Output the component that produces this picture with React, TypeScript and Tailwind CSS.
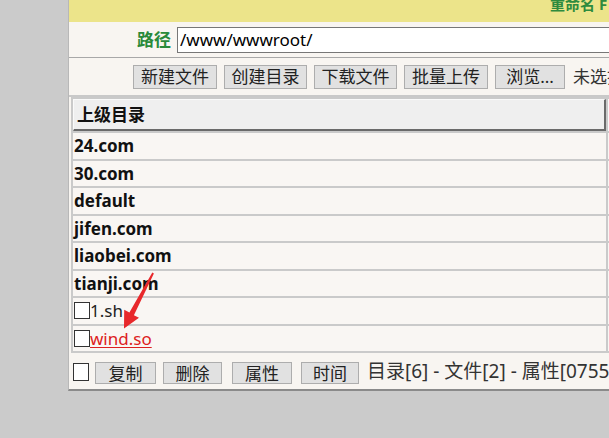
import React from 'react';

const font = { fontFamily: '"Noto Sans", "Noto Sans CJK SC", sans-serif' };

const topButtons = [
  { label: '新建文件', w: 'w-[84px]' },
  { label: '创建目录', w: 'w-[83px]' },
  { label: '下载文件', w: 'w-[83px]' },
  { label: '批量上传', w: 'w-[84px]' },
  { label: '浏览...', w: 'w-[70px]' },
];

const footerButtons = [
  { label: '复制', cls: 'w-[61px]' },
  { label: '删除', cls: 'w-[59px] ml-[7px]' },
  { label: '属性', cls: 'w-[60px] ml-[10px]' },
  { label: '时间', cls: 'w-[58px] ml-[9px]' },
];

const dirs = ['24.com', '30.com', 'default', 'jifen.com', 'liaobei.com', 'tianji.com'];

const Check = () => (
  <span className="inline-block w-[16px] h-[17px] border border-[#333] bg-white shrink-0" />
);

export default function App() {
  return (
    <div className="relative w-[609px] h-[438px] overflow-hidden bg-[#cbcbcb]" style={font}>
      <div className="ml-[68px] w-[640px] bg-[#f8f5f1] border-l border-[#b8b8b8] border-b-2 border-b-[#8a8a8a]">
        {/* yellow title band */}
        <div className="h-[22px] bg-[#ece48a] overflow-hidden">
          <div className="pl-[481px] -mt-[4px] text-[15px] font-bold text-[#2e8b3e] leading-[16px] whitespace-nowrap">
            重命名 F
          </div>
        </div>

        {/* path row */}
        <div className="h-[36px] flex items-start border-b border-[#a8a8a8]">
          <span className="ml-[68px] mt-[7px] text-[17px] font-bold text-[#2a8a3a] leading-[22px]">路径</span>
          <div className="ml-[6px] mt-[5px] h-[26px] w-[480px] bg-white border border-[#777] flex items-center pl-[2px] text-[17px] text-black">
            /www/wwwroot/
          </div>
        </div>

        {/* buttons row */}
        <div className="h-[39px] flex items-start pt-[7px] pl-[64px] gap-[7px] border-b-2 border-[#c9c9c9]">
          {topButtons.map(b => (
            <button
              key={b.label}
              className={`${b.w} h-[24px] bg-[#e1e1e1] border border-[#adadad] text-[17px] leading-[20px] text-[#222] flex items-center justify-center`}
            >
              {b.label}
            </button>
          ))}
          <span className="text-[17px] leading-[24px] text-[#333] whitespace-nowrap ml-[1px]">未选择</span>
        </div>

        {/* listing table */}
        <div className="ml-[2px] bg-[#cacaca] p-[2px] flex flex-col gap-[2px]">
          <div className="flex gap-[2px]">
            <div className="w-[533px] h-[32px] bg-[#efefef] border-t border-l border-[#fafafa] border-r-2 border-b-2 border-r-[#6a6a6a] border-b-[#6a6a6a] flex items-center pl-[3px] text-[17px] font-bold text-[#111]">
              上级目录
            </div>
            <div className="w-[60px] h-[32px] bg-[#efefef] border-l border-[#fafafa]" />
          </div>
          {dirs.map(d => (
            <div key={d} className="flex gap-[2px]">
              <div className="w-[533px] h-[25.5px] bg-[#f9f6f3] flex items-center pl-[1px] text-[17px] font-bold text-[#111]">
                {d}
              </div>
              <div className="w-[60px] h-[25.5px] bg-[#f9f6f3]" />
            </div>
          ))}
          <div className="flex gap-[2px]">
            <div className="w-[533px] h-[25.5px] bg-[#f9f6f3] flex items-center pl-[1px] text-[17px] text-[#222]">
              <Check />
              <span>1.sh</span>
            </div>
            <div className="w-[60px] h-[25.5px] bg-[#f9f6f3]" />
          </div>
          <div className="flex gap-[2px]">
            <div className="w-[533px] h-[25.5px] bg-[#f9f6f3] flex items-center pl-[1px] text-[17px]">
              <Check />
              <span className="text-[#dd2020] underline underline-offset-2">wind.so</span>
            </div>
            <div className="w-[60px] h-[25.5px] bg-[#f9f6f3]" />
          </div>
        </div>

        {/* footer */}
        <div className="h-[36px] flex items-start pt-[9px] pl-[4px]">
          <span className="mt-[1px] inline-block w-[16px] h-[18px] border border-[#333] bg-white" />
          <div className="ml-[6px] flex">
            {footerButtons.map(b => (
              <button
                key={b.label}
                className={`${b.cls} h-[22px] bg-[#e1e1e1] border border-[#adadad] text-[17px] leading-[20px] text-[#222] flex items-center justify-center pt-[2px]`}
              >
                {b.label}
              </button>
            ))}
          </div>
          <span className="ml-[8px] -mt-[4px] text-[19px] leading-[26px] text-[#333] whitespace-nowrap">
            目录[6] - 文件[2] - 属性[0755]
          </span>
        </div>
      </div>

      {/* red annotation arrow */}
      <svg className="absolute inset-0 pointer-events-none" width="609" height="438" viewBox="0 0 609 438">
        <polygon
          points="152.3,272.6 153.9,273.4 133.9,315.2 139,317.8 124,328.5 124.2,309.8 129.4,312.6"
          fill="#e8282b"
        />
      </svg>
    </div>
  );
}
